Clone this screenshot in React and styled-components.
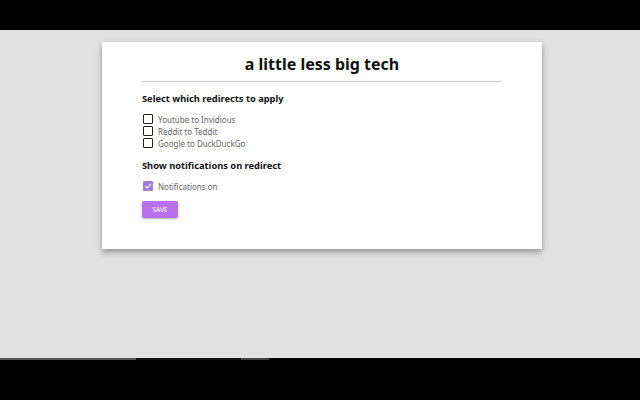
import React from "react";
import styled, { createGlobalStyle } from "styled-components";

const Global = createGlobalStyle`
  html, body { margin: 0; padding: 0; background: #000; }
  body { font-family: "Noto Sans", "Open Sans", sans-serif; }
`;

const Screen = styled.div`
  width: 640px;
  height: 400px;
  display: flex;
  flex-direction: column;
  background: #000;
  overflow: hidden;
`;

const TopBar = styled.div`
  height: 30px;
  flex: none;
  background: #000;
`;

const Stage = styled.div`
  height: 328px;
  flex: none;
  background: #e1e1e1;
  padding-top: 12px;
  padding-left: 102px;
  box-sizing: border-box;
`;

const BottomBar = styled.div`
  flex: 1;
  background: #000;
  display: flex;
  align-items: flex-start;
`;

const Track = styled.div`
  height: 2px;
  width: ${(p) => p.w}px;
  background: ${(p) => p.c};
`;

const Card = styled.div`
  width: 440px;
  height: 207px;
  background: #fff;
  box-sizing: border-box;
  padding: 10px 40px 0;
  box-shadow: 0 3px 6px rgba(0, 0, 0, 0.35);
`;

const Title = styled.h1`
  margin: 0;
  text-align: center;
  font-size: 16px;
  font-weight: 700;
  color: #111;
  line-height: 24px;
  padding-bottom: 5px;
  border-bottom: 1px solid #c8c8c8;
`;

const Heading = styled.h2`
  margin: ${(p) => p.mt}px 0 8px;
  font-size: 9.3px;
  font-weight: 700;
  color: #111;
  line-height: 14px;
`;

const Options = styled.div`
  display: flex;
  flex-direction: column;
  gap: 2px;
`;

const Option = styled.label`
  display: flex;
  align-items: center;
  gap: 5px;
  height: 10px;
  font-size: 8px;
  color: #666;
  padding-left: 1px;
`;

const Box = styled.span`
  width: 10px;
  height: 10px;
  box-sizing: border-box;
  border: ${(p) => (p.checked ? "none" : "1px solid #222")};
  background: ${(p) => (p.checked ? "#a07be0" : "#fff")};
  border-radius: 1px;
  display: flex;
  align-items: center;
  justify-content: center;
`;

const SaveButton = styled.button`
  margin-top: 10px;
  width: 36px;
  height: 17px;
  border: none;
  border-radius: 2px;
  background: #b86ff0;
  color: #fff;
  font-family: inherit;
  font-size: 6.5px;
  padding: 0;
  box-shadow: 0 1px 2px rgba(0, 0, 0, 0.3);
`;

function Check({ checked, label }) {
  return (
    <Option>
      <Box checked={checked}>
        {checked && (
          <svg width="8" height="8" viewBox="0 0 8 8">
            <path d="M1.2 4.2 L3.2 6 L6.8 2" fill="none" stroke="#fff" strokeWidth="1.2" />
          </svg>
        )}
      </Box>
      {label}
    </Option>
  );
}

export default function App() {
  return (
    <Screen>
      <Global />
      <TopBar />
      <Stage>
        <Card>
          <Title>a little less big tech</Title>
          <Heading mt={10}>Select which redirects to apply</Heading>
          <Options>
            <Check label="Youtube to Invidious" />
            <Check label="Reddit to Teddit" />
            <Check label="Google to DuckDuckGo" />
          </Options>
          <Heading mt={11}>Show notifications on redirect</Heading>
          <Options>
            <Check checked label="Notifications on" />
          </Options>
          <SaveButton>SAVE</SaveButton>
        </Card>
      </Stage>
      <BottomBar>
        <Track w={136} c="#555" />
        <Track w={105} c="#111" />
        <Track w={28} c="#444" />
      </BottomBar>
    </Screen>
  );
}
